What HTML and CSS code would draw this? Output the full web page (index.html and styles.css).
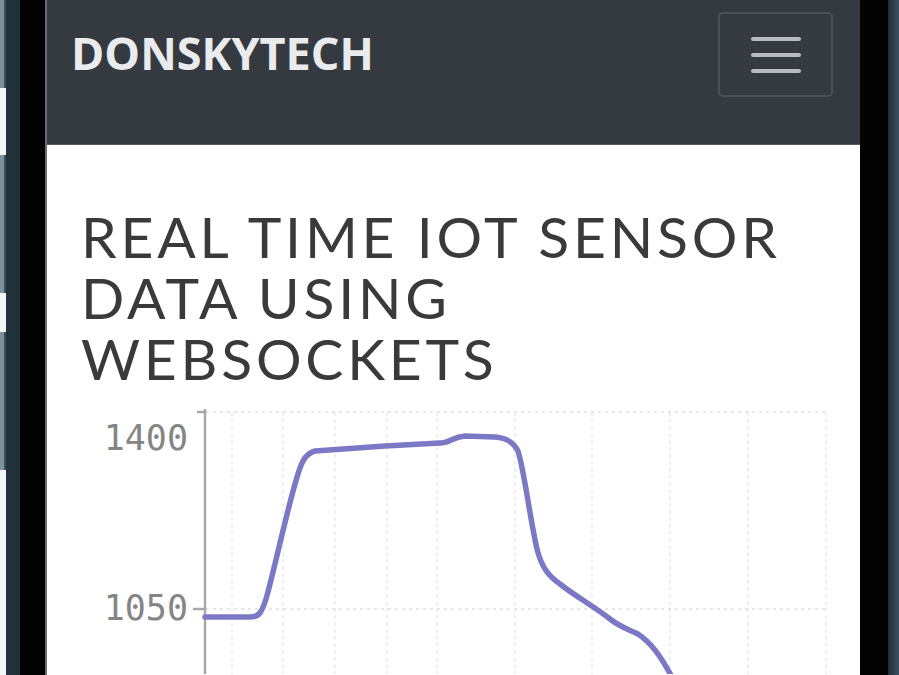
FILE: index.html
```html
<!DOCTYPE html>
<html lang="en">
<head>
<meta charset="utf-8">
<title>DonskyTech</title>
<link rel="stylesheet" href="styles.css">
</head>
<body>
<div class="device">
  <div class="frame-left">
    <div class="side-strip">
      <span class="btn btn-a"></span>
      <span class="btn btn-b"></span>
      <span class="btn btn-c"></span>
    </div>
    <div class="rim-teal"></div>
    <div class="rim-black"></div>
    <div class="rim-edge"></div>
  </div>
  <div class="screen">
    <nav class="navbar">
      <span class="brand">DONSKYTECH</span>
      <button class="toggler" aria-label="Menu">
        <span class="bar"></span>
        <span class="bar"></span>
        <span class="bar"></span>
      </button>
    </nav>
    <main class="content">
      <h1 class="title">REAL TIME IOT SENSOR DATA USING WEBSOCKETS</h1>
      <svg class="chart" width="813" height="275" viewBox="0 0 813 275">
        <g transform="translate(-47,-400)">
          <g class="grid-v">
            <line x1="232" y1="413" x2="232" y2="680"/>
            <line x1="283" y1="413" x2="283" y2="680"/>
            <line x1="335" y1="413" x2="335" y2="680"/>
            <line x1="387" y1="413" x2="387" y2="680"/>
            <line x1="437" y1="413" x2="437" y2="680"/>
            <line x1="515" y1="413" x2="515" y2="680"/>
            <line x1="592" y1="413" x2="592" y2="680"/>
            <line x1="670" y1="413" x2="670" y2="680"/>
            <line x1="748" y1="413" x2="748" y2="680"/>
            <line x1="826" y1="413" x2="826" y2="680"/>
          </g>
          <g class="grid-h">
            <line x1="206" y1="413" x2="828" y2="413"/>
            <line x1="206" y1="610" x2="828" y2="610"/>
          </g>
          <g class="axis">
            <line x1="205" y1="410" x2="205" y2="680"/>
            <line x1="197" y1="413" x2="205" y2="413"/>
            <line x1="193" y1="610" x2="205" y2="610"/>
          </g>
          <text class="tick" x="188" y="451">1400</text>
          <text class="tick" x="188" y="621">1050</text>
          <path class="series" d="M205,618 L250,618 C260,618 262,612 266,600 C272,580 285,520 295,485 C300,468 303,455 315,452 L385,447 L440,444 C450,444 452,438 465,437 L495,438 C508,439 514,444 518,452 C524,470 530,520 537,550 C542,570 550,578 560,585 C575,597 595,608 610,620 C620,628 628,630 638,635 C650,643 660,655 674,682"/>
        </g>
      </svg>
    </main>
  </div>
  <div class="frame-right">
    <div class="rim-black-r"></div>
    <div class="rim-teal-r"></div>
  </div>
</div>
</body>
</html>
```
FILE: styles.css
```css
* { box-sizing: border-box; }

html, body {
  margin: 0;
  padding: 0;
  width: 899px;
  height: 675px;
  overflow: hidden;
  background: #ffffff;
}

.device {
  display: flex;
  width: 899px;
  height: 675px;
}

.frame-left {
  display: flex;
  flex: 0 0 47px;
  height: 100%;
}

.side-strip {
  position: relative;
  flex: 0 0 6px;
  background: #f3f5f7;
}

.btn {
  position: absolute;
  left: 0;
  width: 6px;
  background: #7f909c;
  border-right: 2px solid #3d4d57;
}
.btn-a { top: 0; height: 88px; }
.btn-b { top: 155px; height: 138px; }
.btn-c { top: 332px; height: 138px; }

.rim-teal {
  flex: 0 0 14px;
  background: #213139;
}

.rim-black {
  flex: 0 0 25px;
  background: #030303;
}

.rim-edge {
  flex: 0 0 2px;
  background: #6b6f73;
}

.screen {
  flex: 0 0 813px;
  display: flex;
  flex-direction: column;
  background: #ffffff;
}

.navbar {
  display: flex;
  justify-content: space-between;
  align-items: flex-start;
  height: 145px;
  padding: 12px 27px 0 24px;
  background: #343a40;
  border-bottom: 1px solid #575c62;
}

.brand {
  margin-top: 17px;
  font-family: "Open Sans", "Liberation Sans", sans-serif;
  font-weight: 700;
  font-size: 45px;
  line-height: 48px;
  color: #eaebec;
  letter-spacing: 0;
}

.toggler {
  display: flex;
  flex-direction: column;
  align-items: center;
  justify-content: center;
  gap: 12px;
  width: 115px;
  height: 85px;
  padding: 0;
  background: transparent;
  border: 2px solid #4b5157;
  border-radius: 5px;
}

.bar {
  display: block;
  width: 50px;
  height: 4px;
  background: #b9bbbd;
  border-radius: 2px;
}

.content {
  display: flex;
  flex-direction: column;
}

.title {
  margin: 61px 30px 0 34px;
  font-family: "Lato", "Open Sans", sans-serif;
  font-weight: 400;
  font-size: 57px;
  line-height: 61px;
  letter-spacing: 3.8px;
  color: #3a3a3a;
}

.chart {
  display: block;
  margin-top: 10px;
}

.grid-v line {
  stroke: #ececec;
  stroke-width: 1.5;
  stroke-dasharray: 4 3;
}

.grid-h line {
  stroke: #dedede;
  stroke-width: 1.5;
  stroke-dasharray: 3 4;
}

.axis line {
  stroke: #a8a8a8;
  stroke-width: 2.5;
}

.tick {
  font-family: "DejaVu Sans Mono", "Liberation Mono", monospace;
  font-size: 35px;
  fill: #858585;
  text-anchor: end;
}

.series {
  fill: none;
  stroke: #7b79c6;
  stroke-width: 5.5;
  stroke-linecap: round;
  stroke-linejoin: round;
}

.frame-right {
  display: flex;
  flex: 0 0 39px;
  height: 100%;
}

.rim-black-r {
  flex: 0 0 28px;
  background: #030303;
}

.rim-teal-r {
  flex: 0 0 11px;
  background: linear-gradient(90deg, #1e2e36, #3c5260);
}
```
